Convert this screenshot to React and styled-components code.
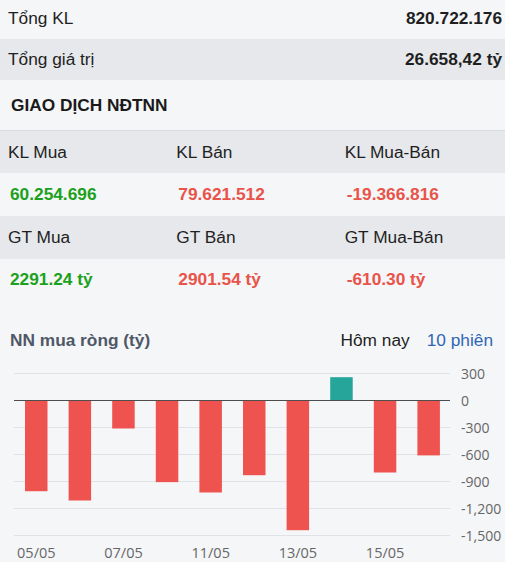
import React from "react";
import styled, { createGlobalStyle } from "styled-components";

const Global = createGlobalStyle`
  html, body { margin: 0; padding: 0; background: #f5f6f8; }
  body { font-family: "Liberation Sans", Arial, sans-serif; color: #1f1f1f; }
  * { box-sizing: border-box; }
`;

const Page = styled.div`
  width: 505px;
  height: 562px;
  overflow: hidden;
  background: #f5f6f8;
  font-size: 17.3px;
`;

const SummaryRow = styled.div`
  display: flex;
  align-items: center;
  justify-content: space-between;
  height: ${(p) => p.$h}px;
  padding: 0 3px ${(p) => p.$pb || 0}px 8px;
  background: ${(p) => (p.$shade ? "#e6e8eb" : "#f5f6f8")};
`;

const SummaryLabel = styled.span`
  font-weight: 400;
`;

const SummaryValue = styled.span`
  font-weight: 700;
  color: #1f1f1f;
`;

const SectionTitle = styled.div`
  height: 50px;
  display: flex;
  align-items: center;
  padding-left: 11px;
  font-weight: 700;
  color: #1a1a1a;
`;

const Table = styled.div`
  border-top: 1px solid #d9dce0;
`;

const TRow = styled.div`
  display: grid;
  grid-template-columns: repeat(3, 1fr);
  height: ${(p) => p.$h}px;
  align-items: center;
  background: ${(p) => (p.$shade ? "#e6e8eb" : "#f5f6f8")};
`;

const HeadCell = styled.div`
  padding-left: 8px;
  color: #1f1f1f;
`;

const ValCell = styled.div`
  padding-left: 10px;
  font-weight: 700;
  color: ${(p) => (p.$up ? "#1ba11b" : "#e8534a")};
`;

const ChartSection = styled.div`
  padding-top: 28px;
`;

const ChartHeader = styled.div`
  display: flex;
  align-items: center;
  justify-content: space-between;
  height: 26px;
  padding: 0 12px 0 10px;
`;

const ChartTitle = styled.div`
  font-weight: 700;
  color: #4f5866;
`;

const Tabs = styled.div`
  display: flex;
  gap: 17px;
`;

const Tab = styled.span`
  color: ${(p) => (p.$active ? "#2f66b3" : "#1f1f1f")};
`;

const ChartSvg = styled.svg`
  display: block;
`;

const bars = [-1008, -1111, -311, -907, -1022, -830, -1441, 259, -800, -610];
const ticks = [300, 0, -300, -600, -900, -1200, -1500];
const dates = [
  [0, "05/05"],
  [2, "07/05"],
  [4, "11/05"],
  [6, "13/05"],
  [8, "15/05"],
];

const Y0 = 47.5;
const STEP = 27;
const yOf = (v) => Y0 - (v / 300) * STEP;
const LEFT = 14;
const RIGHT = 450;
const CAT = (RIGHT - LEFT) / 10;

function Chart() {
  return (
    <ChartSvg width="505" height="208" viewBox="0 0 505 208">
      {ticks.map((t) =>
        t === 0 ? null : (
          <line key={t} x1={LEFT} x2={RIGHT} y1={yOf(t)} y2={yOf(t)} stroke="#dfe2e6" strokeWidth="1" />
        )
      )}
      {bars.map((v, i) => {
        const x = LEFT + i * CAT + 11;
        const y = v >= 0 ? yOf(v) : Y0;
        const h = Math.abs(yOf(v) - Y0);
        return <rect key={i} x={x} y={y} width={22.5} height={h} fill={v >= 0 ? "#26a69a" : "#ef5350"} />;
      })}
      <line x1={LEFT} x2={RIGHT} y1={Y0} y2={Y0} stroke="#4d4d4d" strokeWidth="1" />
      {ticks.map((t) => (
        <text
          key={t}
          x={461}
          y={yOf(t)}
          dominantBaseline="central"
          fill="#666"
          fontFamily="'Open Sans', sans-serif"
          fontSize="14"
        >
          {t === 0 ? "0" : t.toLocaleString("en-US")}
        </text>
      ))}
      {dates.map(([i, d]) => (
        <text
          key={d}
          x={LEFT + i * CAT + 22.3}
          y={199}
          textAnchor="middle"
          dominantBaseline="central"
          fill="#666"
          fontFamily="'Open Sans', sans-serif"
          fontSize="14.5"
        >
          {d}
        </text>
      ))}
    </ChartSvg>
  );
}

export default function App() {
  return (
    <Page>
      <Global />
      <SummaryRow $h={39} $pb={2}>
        <SummaryLabel>Tổng KL</SummaryLabel>
        <SummaryValue>820.722.176</SummaryValue>
      </SummaryRow>
      <SummaryRow $h={41} $shade>
        <SummaryLabel>Tổng giá trị</SummaryLabel>
        <SummaryValue>26.658,42 tỷ</SummaryValue>
      </SummaryRow>
      <SectionTitle>GIAO DỊCH NĐTNN</SectionTitle>
      <Table>
        <TRow $h={42} $shade>
          <HeadCell>KL Mua</HeadCell>
          <HeadCell>KL Bán</HeadCell>
          <HeadCell>KL Mua-Bán</HeadCell>
        </TRow>
        <TRow $h={43}>
          <ValCell $up>60.254.696</ValCell>
          <ValCell>79.621.512</ValCell>
          <ValCell>-19.366.816</ValCell>
        </TRow>
        <TRow $h={43} $shade>
          <HeadCell>GT Mua</HeadCell>
          <HeadCell>GT Bán</HeadCell>
          <HeadCell>GT Mua-Bán</HeadCell>
        </TRow>
        <TRow $h={40}>
          <ValCell $up>2291.24 tỷ</ValCell>
          <ValCell>2901.54 tỷ</ValCell>
          <ValCell>-610.30 tỷ</ValCell>
        </TRow>
      </Table>
      <ChartSection>
        <ChartHeader>
          <ChartTitle>NN mua ròng (tỷ)</ChartTitle>
          <Tabs>
            <Tab>Hôm nay</Tab>
            <Tab $active>10 phiên</Tab>
          </Tabs>
        </ChartHeader>
        <Chart />
      </ChartSection>
    </Page>
  );
}
